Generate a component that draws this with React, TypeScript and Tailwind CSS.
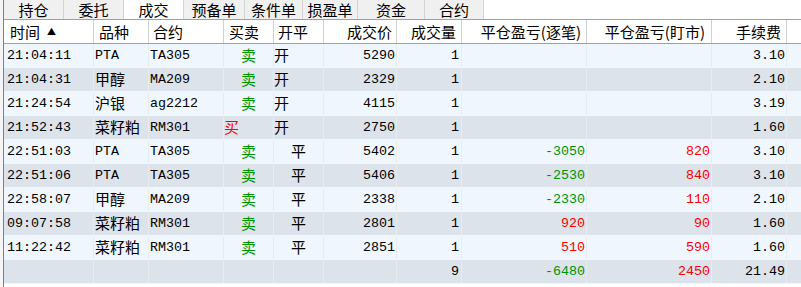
type Col = {
  title: string;
  width: string;
  headAlign: string;
  cellAlign: string;
};

const cols: Col[] = [
  { title: "时间", width: "w-[90px]", headAlign: "justify-start pl-[6px]", cellAlign: "justify-start pl-[3px]" },
  { title: "品种", width: "w-[55px]", headAlign: "justify-start pl-[5px]", cellAlign: "justify-start pl-[1px]" },
  { title: "合约", width: "w-[75px]", headAlign: "justify-start pl-[4px]", cellAlign: "justify-start pl-[1px]" },
  { title: "买卖", width: "w-[50px]", headAlign: "justify-start pl-[5px]", cellAlign: "justify-center" },
  { title: "开平", width: "w-[50px]", headAlign: "justify-start pl-[4px]", cellAlign: "justify-center" },
  { title: "成交价", width: "w-[73px]", headAlign: "justify-end pr-[4px]", cellAlign: "justify-end pr-[1px]" },
  { title: "成交量", width: "w-[65px]", headAlign: "justify-end pr-[5px]", cellAlign: "justify-end pr-[2px]" },
  { title: "平仓盈亏(逐笔)", width: "w-[125px]", headAlign: "justify-end pr-[5px]", cellAlign: "justify-end pr-[1px]" },
  { title: "平仓盈亏(盯市)", width: "w-[125px]", headAlign: "justify-end pr-[6px]", cellAlign: "justify-end pr-[1px]" },
  { title: "手续费", width: "w-[75px]", headAlign: "justify-end pr-[5px]", cellAlign: "justify-end pr-[1px]" },
];

const tabs: { name: string; width: string }[] = [
  { name: "持仓", width: "w-[60px]" },
  { name: "委托", width: "w-[60px]" },
  { name: "成交", width: "w-[60px]" },
  { name: "预备单", width: "w-[61px]" },
  { name: "条件单", width: "w-[58px]" },
  { name: "损盈单", width: "w-[55px]" },
  { name: "资金", width: "w-[67px]" },
  { name: "合约", width: "w-[59px]" },
];

const trades: string[][] = [
  ["21:04:11", "PTA", "TA305", "卖", "开", "5290", "1", "", "", "3.10"],
  ["21:04:31", "甲醇", "MA209", "卖", "开", "2329", "1", "", "", "2.10"],
  ["21:24:54", "沪银", "ag2212", "卖", "开", "4115", "1", "", "", "3.19"],
  ["21:52:43", "菜籽粕", "RM301", "买", "开", "2750", "1", "", "", "1.60"],
  ["22:51:03", "PTA", "TA305", "卖", "平", "5402", "1", "-3050", "820", "3.10"],
  ["22:51:06", "PTA", "TA305", "卖", "平", "5406", "1", "-2530", "840", "3.10"],
  ["22:58:07", "甲醇", "MA209", "卖", "平", "2338", "1", "-2330", "110", "2.10"],
  ["09:07:58", "菜籽粕", "RM301", "卖", "平", "2801", "1", "920", "90", "1.60"],
  ["11:22:42", "菜籽粕", "RM301", "卖", "平", "2851", "1", "510", "590", "1.60"],
  ["", "", "", "", "", "", "9", "-6480", "2450", "21.49"],
];

const hasCjk = (s: string) => /[\u4e00-\u9fff]/.test(s);

const cellColor = (value: string, idx: number) => {
  if (idx === 3) return value === "买" ? "text-[#ff0000]" : "text-[#009000]";
  if (idx === 7 || idx === 8) {
    if (value.startsWith("-")) return "text-[#009000]";
    if (value) return "text-[#ff0000]";
  }
  return "text-black";
};

// the dealer client puts 买 / 开 flush left, the rest centred
const cellAlign = (value: string, idx: number) => {
  if ((idx === 3 && value === "买") || (idx === 4 && value === "开")) return "justify-start";
  return cols[idx].cellAlign;
};

const TradeRow = ({ row, index }: { row: string[]; index: number }) => {
  const bg = index % 2 === 0 ? "bg-[#eff6fe]" : "bg-[#dde3ea]";
  return (
    <div className={`flex h-[24px] border-b border-[#f4f7fa] ${bg}`}>
      {row.map((v, i) => (
        <div
          key={i}
          className={`flex items-center h-full shrink-0 border-r border-[#e9ecef] ${cols[i].width} ${cellAlign(v, i)} ${cellColor(v, i)} ${
            hasCjk(v)
              ? "text-[15px] font-['Noto_Sans_CJK_SC',sans-serif]"
              : "text-[13.33px] font-['Liberation_Mono',monospace]"
          }`}
        >
          {v}
        </div>
      ))}
      <div className="flex-1" />
    </div>
  );
};

const App = () => {
  return (
    <div className="w-[801px] h-[287px] bg-white overflow-hidden flex font-['Noto_Sans_CJK_SC',sans-serif]">
      <div className="w-[3px] shrink-0 bg-[#f5f5f5]" />
      <div className="flex-1 flex flex-col border-l border-[#808080]">
        <div className="flex h-[20px] border-b border-[#a0a0a0] bg-white">
          {tabs.map((t) => (
            <div
              key={t.name}
              className={`${t.width} shrink-0 flex items-center justify-center text-[15px] leading-none text-black border-r border-[#d4d4d4] ${
                t.name === "成交" ? "bg-white" : "bg-[#f0f0f0]"
              }`}
            >
              {t.name}
            </div>
          ))}
        </div>
        <div className="flex h-[24px] border-b border-[#a0a0a0] bg-white">
          {cols.map((c, i) => (
            <div
              key={c.title}
              className={`flex items-center shrink-0 h-full border-r border-[#d0d0d0] text-[15px] leading-none text-black ${c.width} ${c.headAlign}`}
            >
              {c.title}
              {i === 0 && <span className="ml-[7px] text-[9px]">▲</span>}
            </div>
          ))}
          <div className="flex-1" />
        </div>
        {trades.map((r, i) => (
          <TradeRow key={i} row={r} index={i} />
        ))}
      </div>
    </div>
  );
};

export default App;
